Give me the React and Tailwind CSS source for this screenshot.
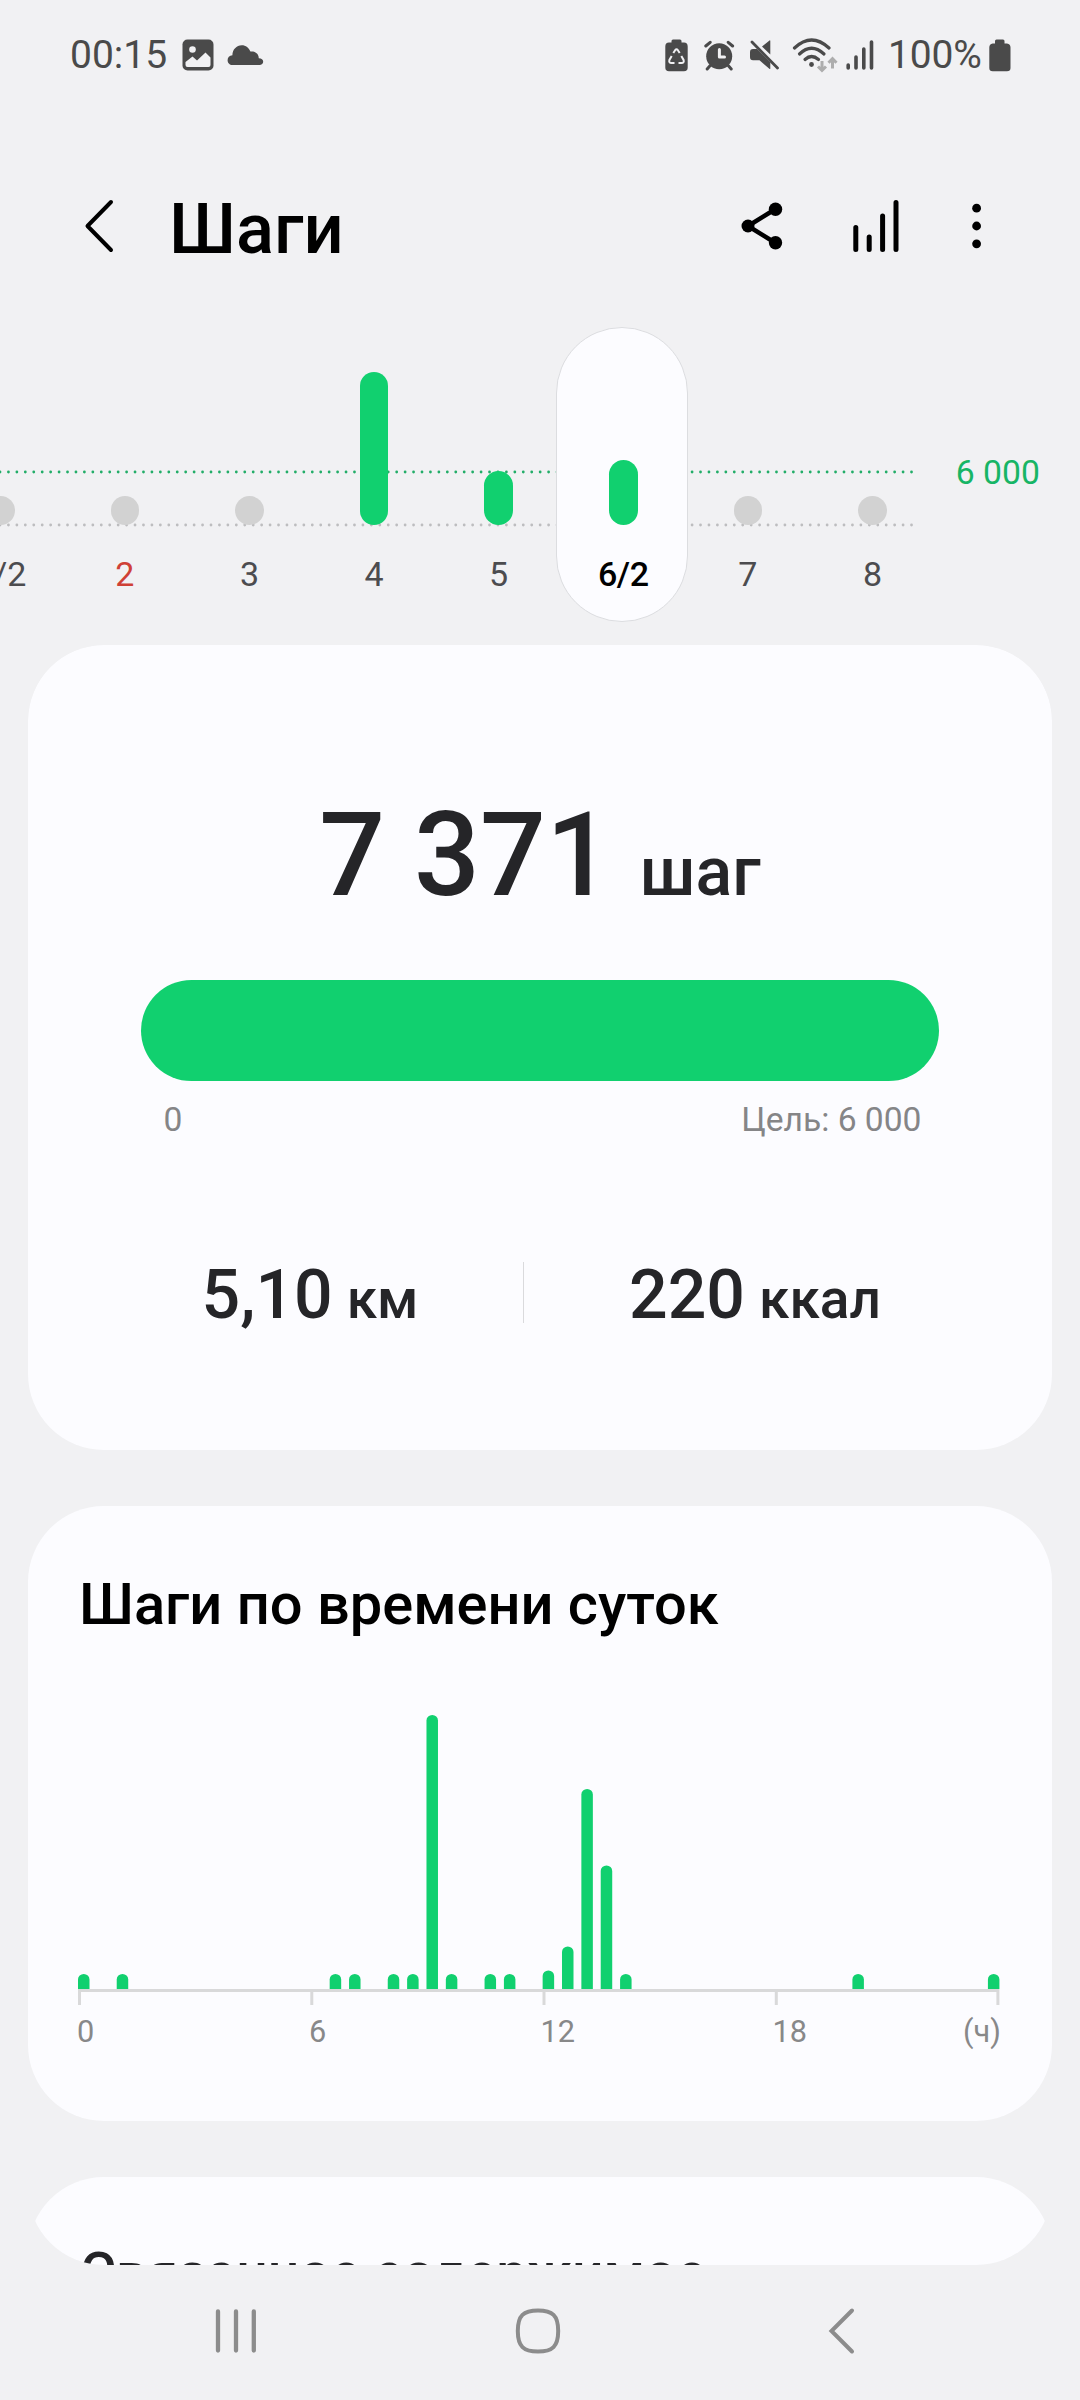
import React from "react";

const days = [
  { label: "1/2", steps: 0 },
  { label: "2", steps: 0, holiday: true },
  { label: "3", steps: 0 },
  { label: "4", steps: 17000, height: 153 },
  { label: "5", steps: 6100, height: 54 },
  { label: "6/2", steps: 7371, height: 65, selected: true },
  { label: "7", steps: 0 },
  { label: "8", steps: 0 },
];

// slot = half an hour
const hourBars = [
  { slot: 0, h: 15 },
  { slot: 2, h: 15 },
  { slot: 13, h: 15 },
  { slot: 14, h: 15 },
  { slot: 16, h: 15 },
  { slot: 17, h: 15 },
  { slot: 18, h: 274 },
  { slot: 19, h: 15 },
  { slot: 21, h: 15 },
  { slot: 22, h: 15 },
  { slot: 24, h: 18.5 },
  { slot: 25, h: 42.5 },
  { slot: 26, h: 200 },
  { slot: 27, h: 123.5 },
  { slot: 28, h: 15 },
  { slot: 40, h: 15 },
  { slot: 47, h: 15 },
];

const StatusBar = () => {
  return (
    <div className="flex h-[110px] items-center justify-between pl-[70px] pr-[69px] text-[#4a4a4a]">
      <div className="flex items-center">
        <span className="w-[98px] text-[39px] leading-[46px] whitespace-nowrap">00:15</span>
        <svg className="ml-[14px]" width="32" height="32" viewBox="0 0 32 32">
          <rect x="0.5" y="0.5" width="31" height="31" rx="5" fill="#4a4a4a" />
          <circle cx="10.5" cy="10.5" r="3.3" fill="#f1f1f3" />
          <path d="M3.5 23L10.5 17.5L15 21.5L23.5 13.5L28.5 18.5V26Q28.5 28 26.5 28H5.5Q3.5 28 3.5 26Z" fill="#f1f1f3" />
        </svg>
        <svg className="ml-[13px]" width="37" height="22" viewBox="0 0 37 22">
          <path
            d="M5.5 21C2.5 21 0.6 18.8 0.6 16.2C0.6 13.6 2.4 11.5 5.4 11.3C5.4 5.5 9.5 1.2 14.8 1.2C18.8 1.2 22 3.8 23.4 7.6C28 6.8 31.8 9.8 31.8 14.3C34.5 14.3 36.2 15.8 36.2 17.8C36.2 19.8 34.6 21 32.5 21Z"
            fill="#4a4a4a"
          />
        </svg>
      </div>
      <div className="flex items-center">
        <svg width="23" height="33" viewBox="0 0 23 33">
          <path d="M6.5 3.5V2Q6.5 0.5 8 0.5H15Q16.5 0.5 16.5 2V3.5H19Q22.7 3.5 22.7 7.5V28.5Q22.7 32.3 19 32.3H4Q0.3 32.3 0.3 28.5V7.5Q0.3 3.5 4 3.5Z" fill="#4a4a4a" />
          <path
            d="M8.3 14L10.3 11Q11.5 9.6 12.7 11L14.7 14M16.3 17L18.6 21Q19.4 24 16.5 24H13.5M9.5 24H6.5Q3.6 24 4.4 21L6.7 17"
            fill="none"
            stroke="#f1f1f3"
            strokeWidth="2"
          />
        </svg>
        <svg className="ml-[16px]" width="31" height="31" viewBox="0 0 31 31">
          <circle cx="15.2" cy="16.2" r="13" fill="#4a4a4a" />
          <path d="M1.8 6L6.2 2.3M28.6 6L24.2 2.3M3.2 29L6 25.8M27.2 29L24.4 25.8" stroke="#4a4a4a" strokeWidth="3" strokeLinecap="round" />
          <path d="M15.4 9.5V17H20.5" fill="none" stroke="#f1f1f3" strokeWidth="3" strokeLinecap="round" strokeLinejoin="round" />
        </svg>
        <svg className="ml-[14px]" width="31" height="32" viewBox="0 0 31 32">
          <path d="M13 7.5L20.5 1.5Q21.3 1 21.3 2V15.5ZM8 10L21.3 23.5V29.5Q21.3 30.5 20.3 29.8L10.5 21.3H4Q1 21.3 1 18V13.3Q1 10 4 10Z" fill="#4a4a4a" />
          <path d="M3 3L28.5 29" stroke="#4a4a4a" strokeWidth="2.8" strokeLinecap="round" />
        </svg>
        <svg className="ml-[12px]" width="46" height="36" viewBox="0 0 46 36">
          <g fill="none" stroke="#4a4a4a" strokeWidth="3.2" strokeLinecap="round">
            <path d="M2.5 11Q19.5 -5 37 11" />
            <path d="M7.5 17Q19.5 5.5 32 17" />
            <path d="M13 22.5Q19.5 16.5 26.5 22.5" />
          </g>
          <circle cx="19.5" cy="27.5" r="2.4" fill="#4a4a4a" />
          <path
            d="M30 24V33M26 29.5L30 33.5L34 29.5M40.5 31.5V22M36.5 25.7L40.5 21.7L44.5 25.7"
            fill="none"
            stroke="#adadad"
            strokeWidth="3"
          />
        </svg>
        <svg className="ml-[8px]" width="30" height="32" viewBox="0 0 30 32">
          <path d="M2.2 26V29M10 18V29M17.8 10V29M25.5 3V29" stroke="#4a4a4a" strokeWidth="3.6" strokeLinecap="round" />
        </svg>
        <span className="ml-[12px] w-[95px] text-[39px] leading-[46px] tracking-[-0.2px] whitespace-nowrap">100%</span>
        <svg className="ml-[6px]" width="22" height="33" viewBox="0 0 22 33">
          <path d="M6 5V2Q6 0.5 7.5 0.5H14Q15.5 0.5 15.5 2V4.5H18Q21.5 5 21.5 8.5V29Q21.5 32.3 18 32.3H3.7Q0.3 32.3 0.3 29V8.5Q0.3 5 3.7 4.5H6Z" fill="#4a4a4a" />
        </svg>
      </div>
    </div>
  );
};

const Header = () => {
  return (
    <header className="flex h-[232px] items-center justify-between pl-[84px] pr-[96px]">
      <div className="flex items-center">
        <svg width="32" height="56" viewBox="0 0 32 56">
          <path d="M27 4L3.5 28L27 52" fill="none" stroke="#000" strokeWidth="4" strokeLinecap="round" strokeLinejoin="round" />
        </svg>
        <h1 className="mt-[5px] ml-[53px] text-[70.5px] leading-[84px] font-medium text-black">Шаги</h1>
      </div>
      <div className="flex items-center">
        <svg width="42" height="50" viewBox="0 0 42 50">
          <path d="M34.5 8L7 25L34.5 42" fill="none" stroke="#000" strokeWidth="4.6" />
          <circle cx="34.5" cy="8.2" r="6.7" />
          <circle cx="7" cy="25" r="6.5" />
          <circle cx="34.5" cy="41.8" r="6.7" />
        </svg>
        <svg className="ml-[69px]" width="48" height="56" viewBox="0 0 48 56">
          <path d="M3.8 29.5V51.5M17.2 39V51.5M30.6 18V51.5M44 4.5V51.5" stroke="#000" strokeWidth="5" strokeLinecap="round" />
        </svg>
        <svg className="ml-[72px]" width="12" height="50" viewBox="0 0 12 50">
          <circle cx="4.6" cy="7.2" r="4.4" />
          <circle cx="4.6" cy="25" r="4.4" />
          <circle cx="4.6" cy="42.8" r="4.4" />
        </svg>
      </div>
    </header>
  );
};

const DayColumn = ({ day }) => {
  const labelColor = day.selected ? "font-medium text-black tracking-[-0.4px]" : day.holiday ? "text-[#cf4036]" : "text-[#4c4c4f]";

  return (
    <div className="relative flex h-full w-[124.6px] shrink-0 flex-col items-center justify-end">
      {day.selected && (
        <div className="absolute top-0 left-[-4.5px] h-[295px] w-[132px] rounded-full border border-[#dcdde0] bg-[#fcfcff]" />
      )}
      {day.steps > 0 ? (
        <div className="relative w-[28.6px] rounded-full bg-[#11d06f]" style={{ height: day.height }} />
      ) : (
        <div className="relative size-[28.6px] rounded-full bg-[#d2d2d2]" />
      )}
      <span className={`relative mt-[29px] mb-[28px] text-[34px] leading-[40px] ${labelColor}`}>{day.label}</span>
    </div>
  );
};

const WeekChart = () => {
  return (
    <section className="relative flex h-[303px] overflow-hidden pb-[7px]">
      <svg className="absolute top-0 left-0" width="916" height="296">
        <line x1="0" y1="145" x2="914" y2="145" stroke="#22ad68" strokeWidth="2.8" strokeLinecap="round" strokeDasharray="0 8.44" />
        <line x1="0" y1="198" x2="914" y2="198" stroke="#bdbdbf" strokeWidth="2.8" strokeLinecap="round" strokeDasharray="0 8.44" />
      </svg>
      <div className="-ml-[62px] flex h-[295px]">
        {days.map((day) => (
          <DayColumn key={day.label} day={day} />
        ))}
      </div>
      <span className="mt-[126px] ml-[21px] text-[33.7px] leading-[40px] whitespace-nowrap text-[#17b565]">6 000</span>
    </section>
  );
};

const SummaryCard = () => {
  return (
    <section className="flex h-[805px] shrink-0 flex-col items-center rounded-[76px] bg-[#fcfcff] pt-[142px] text-[#252528]">
      <div className="flex items-baseline font-medium">
        <span className="text-[116px] leading-[137px]">7 371</span>
        <span className="ml-[28px] text-[68px] leading-[80px]">шаг</span>
      </div>
      <div className="mt-[56px] h-[101px] w-[798px] rounded-full bg-[#11d06f]" />
      <div className="mt-[19px] ml-[5px] flex w-[758px] justify-between text-[33.6px] leading-[40px] text-[#858587]">
        <span>0</span>
        <span>Цель: 6 000</span>
      </div>
      <div className="mt-[115px] flex w-full items-center">
        <div className="flex w-[495px] items-baseline justify-center pl-[69px] font-medium">
          <span className="text-[68px] leading-[80px]">5,10</span>
          <span className="ml-[14px] text-[55px]">км</span>
        </div>
        <div className="mb-[10px] h-[61px] w-px bg-[#dadadd]" />
        <div className="flex w-[528px] items-baseline justify-center pr-[66px] font-medium">
          <span className="text-[68px] leading-[80px]">220</span>
          <span className="ml-[14px] text-[55px]">ккал</span>
        </div>
      </div>
    </section>
  );
};

const HourlyCard = () => {
  return (
    <section className="mt-[56px] h-[615px] shrink-0 rounded-[76px] bg-[#fcfcff] px-[50px] pt-[65px]">
      <h2 className="ml-px text-[57.8px] leading-[67px] font-medium whitespace-nowrap text-black">Шаги по времени суток</h2>
      <svg className="mt-[68px] block" width="924" height="300" viewBox="0 0 924 300">
        {hourBars.map(({ slot, h }) => {
          const x = slot * 19.36;
          const top = 283 - h;
          return (
            <path
              key={slot}
              d={`M${x} 283V${top + 5.5}A5.75 5.5 0 0 1 ${x + 11.5} ${top + 5.5}V283Z`}
              fill="#11d06f"
            />
          );
        })}
        <path d="M0 284.4H921.4M1.5 284V299M233.8 284V299M466 284V299M698.3 284V299M919.9 284V299" stroke="#d9d9da" strokeWidth="3" />
      </svg>
      <div className="mt-[8px] -ml-px flex w-[924px] text-[30.7px] leading-[36px] text-[#888889]">
        <span className="w-[232px]">0</span>
        <span className="w-[231.5px]">6</span>
        <span className="w-[232px]">12</span>
        <span className="w-[100px]">18</span>
        <span className="ml-auto">(ч)</span>
      </div>
    </section>
  );
};

const RelatedCard = () => {
  return (
    <section className="mt-[56px] h-[400px] shrink-0 rounded-[76px] bg-[#fcfcff] px-[50px] pt-[63px]">
      <h2 className="ml-[2px] text-[55.3px] leading-[67px] font-medium whitespace-nowrap text-[#252528]">Связанное содержимое</h2>
    </section>
  );
};

const NavBar = () => {
  return (
    <nav className="flex h-[135px] items-center justify-between pr-[223px] pb-[4px] pl-[214px]">
      <svg width="44" height="48" viewBox="0 0 44 48">
        <path d="M4 4.5V43.5M22 4.5V43.5M39.8 4.5V43.5" stroke="#8c8c8c" strokeWidth="4.3" strokeLinecap="round" />
      </svg>
      <svg className="mr-[9px]" width="48" height="48" viewBox="0 0 48 48">
        <path
          d="M24 3.5C38.5 3.5 44.2 8.5 44.2 24C44.2 39.5 38.5 44.5 24 44.5C9.5 44.5 3.8 39.5 3.8 24C3.8 8.5 9.5 3.5 24 3.5Z"
          fill="none"
          stroke="#8c8c8c"
          strokeWidth="4"
        />
      </svg>
      <svg width="30" height="48" viewBox="0 0 30 48">
        <path d="M25 3.5L4.5 24L25 44.5" fill="none" stroke="#8c8c8c" strokeWidth="4" strokeLinecap="round" strokeLinejoin="miter" />
      </svg>
    </nav>
  );
};

const App = () => {
  return (
    <div className="flex h-[2400px] w-[1080px] flex-col overflow-hidden bg-[#f1f1f3] font-[Roboto,sans-serif]">
      <StatusBar />
      <Header />
      <div className="-mt-[15px]">
        <WeekChart />
      </div>
      <main className="mx-[28px] mt-[15px] flex h-[1620px] flex-col overflow-hidden rounded-[76px]">
        <SummaryCard />
        <HourlyCard />
        <RelatedCard />
      </main>
      <NavBar />
    </div>
  );
};

export default App;
